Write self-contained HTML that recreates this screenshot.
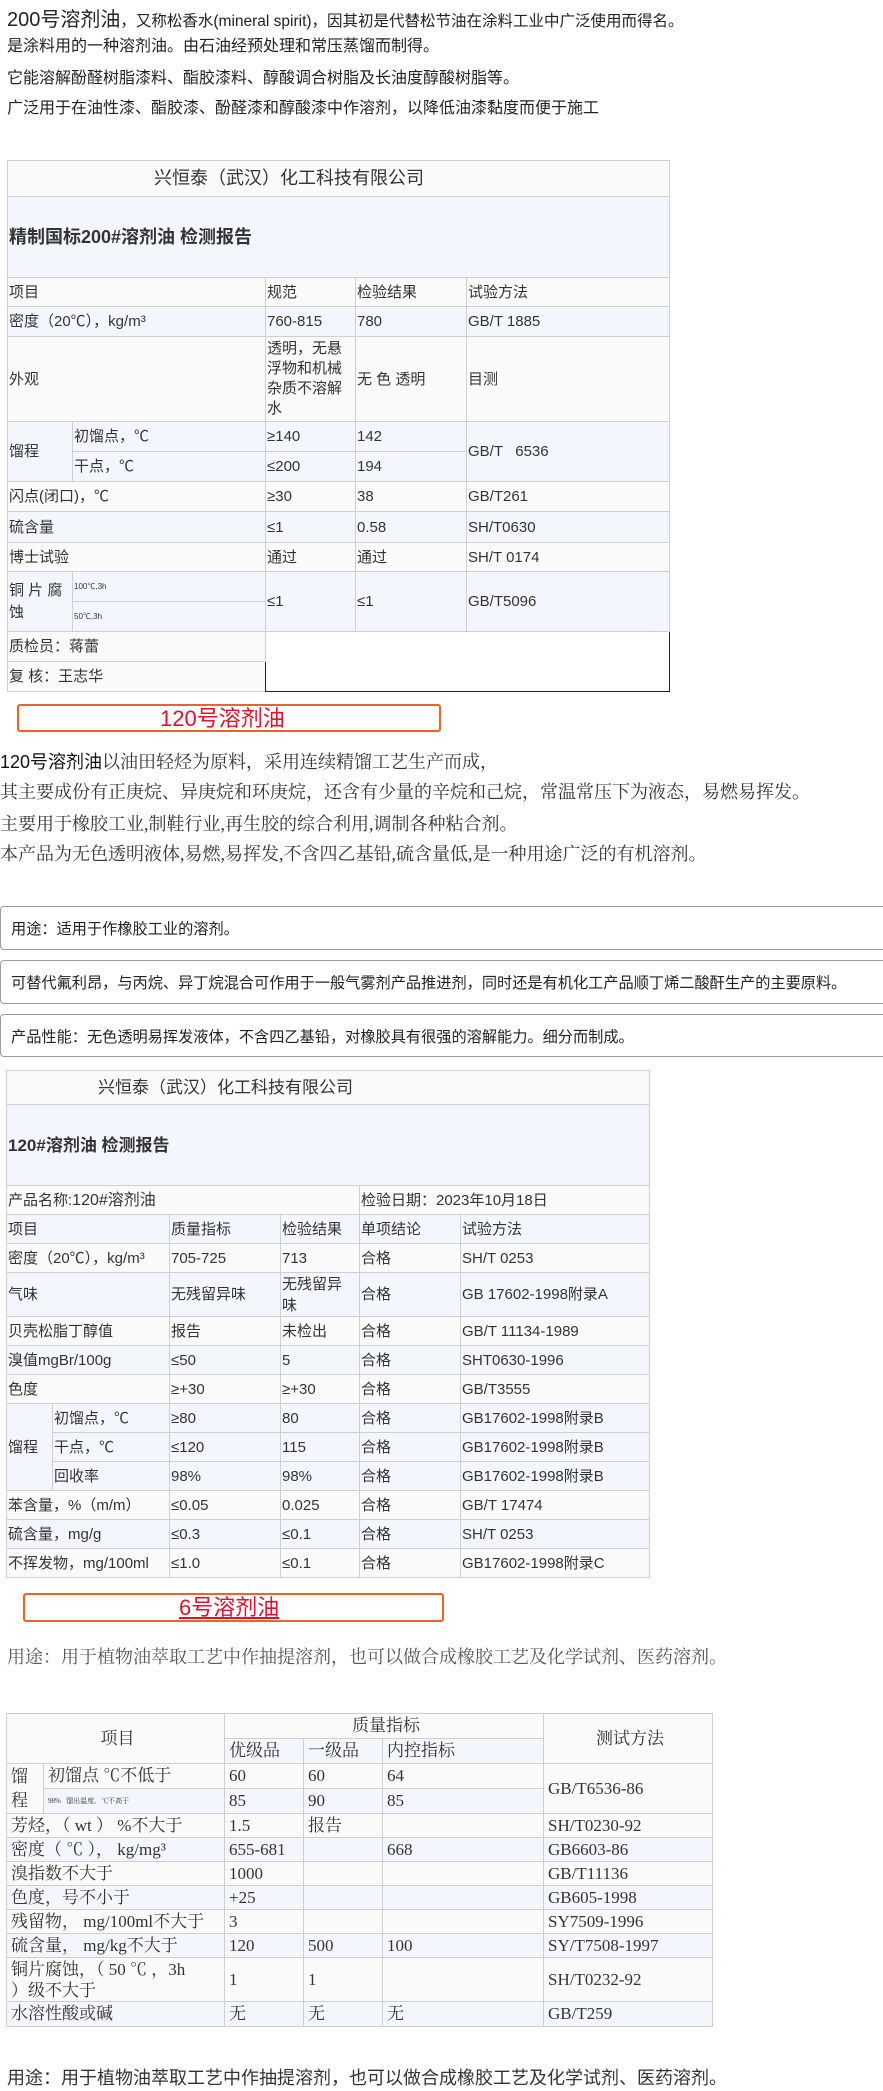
<!DOCTYPE html>
<html><head><meta charset="utf-8">
<style>
*{margin:0;padding:0;box-sizing:border-box}
body{width:883px;height:2091px;background:#fff;position:relative;overflow:hidden;font-family:"Liberation Sans","Noto Sans CJK SC",sans-serif;color:#222}
.abs{position:absolute;white-space:nowrap}
table{border-collapse:collapse;table-layout:fixed;position:absolute}
td{border:1px solid #cfcfcf;padding:0 0 0 1px;vertical-align:middle;white-space:nowrap;overflow:hidden;color:#333}
.a td{background:#fafafa}
.b td{background:#f3f7fd}
.t1 td,.t2 td{font-size:15px;line-height:19px}
.t3 td{font-family:"Liberation Serif","Noto Serif CJK SC",serif;font-size:17px;line-height:22px;padding-left:4px}
.ob{position:absolute;border:2px solid #e8642a;border-radius:3px;color:#e3102a;font-size:22px;line-height:26px}
.box{position:absolute;left:0;width:900px;border:1px solid #9a9a9a;border-radius:4px;font-size:15.2px;color:#222;padding-left:10px;display:flex;align-items:center}
.serif{font-family:"Liberation Serif","Noto Serif CJK SC",serif}
</style></head><body>

<div class="abs" style="left:7px;top:8px;font-size:15.5px;line-height:24px"><span style="font-size:20px">200号溶剂油</span>，又称松香水(mineral spirit)，因其初是代替松节油在涂料工业中广泛使用而得名。</div>
<div class="abs" style="left:7px;top:37px;font-size:16px;line-height:20px">是涂料用的一种溶剂油。由石油经预处理和常压蒸馏而制得。</div>
<div class="abs" style="left:7px;top:69px;font-size:16px;line-height:20px">它能溶解酚醛树脂漆料、酯胶漆料、醇酸调合树脂及长油度醇酸树脂等。</div>
<div class="abs" style="left:7px;top:99px;font-size:16px;line-height:20px">广泛用于在油性漆、酯胶漆、酚醛漆和醇酸漆中作溶剂，以降低油漆黏度而便于施工</div>

<table class="t1" style="left:7px;top:160px;width:662px">
<colgroup><col style="width:65px"><col style="width:193px"><col style="width:90px"><col style="width:111px"><col style="width:203px"></colgroup>
<tr class="a" style="height:36px"><td colspan="5" style="font-size:18px;padding-left:146px">兴恒泰（武汉）化工科技有限公司</td></tr>
<tr class="b" style="height:81px"><td colspan="5" style="font-size:18px;font-weight:bold">精制国标200#溶剂油 检测报告</td></tr>
<tr class="a" style="height:29px"><td colspan="2">项目</td><td>规范</td><td>检验结果</td><td>试验方法</td></tr>
<tr class="b" style="height:30px"><td colspan="2">密度（20℃），kg/m³</td><td>760-815</td><td>780</td><td>GB/T 1885</td></tr>
<tr class="a" style="height:85px"><td colspan="2">外观</td><td style="line-height:20px">透明，无悬<br>浮物和机械<br>杂质不溶解<br>水</td><td>无 色 透明</td><td>目测</td></tr>
<tr class="b" style="height:30px"><td rowspan="2">馏程</td><td>初馏点，℃</td><td>≥140</td><td>142</td><td rowspan="2">GB/T &nbsp; 6536</td></tr>
<tr class="b" style="height:30px"><td>干点，℃</td><td>≤200</td><td>194</td></tr>
<tr class="a" style="height:30px"><td colspan="2">闪点(闭口)，℃</td><td>≥30</td><td>38</td><td>GB/T261</td></tr>
<tr class="b" style="height:31px"><td colspan="2">硫含量</td><td>≤1</td><td>0.58</td><td>SH/T0630</td></tr>
<tr class="a" style="height:29px"><td colspan="2">博士试验</td><td>通过</td><td>通过</td><td>SH/T 0174</td></tr>
<tr class="b" style="height:30px"><td rowspan="2" style="line-height:22px">铜 片 腐<br>蚀</td><td style="font-size:8px">100℃,3h</td><td rowspan="2">≤1</td><td rowspan="2">≤1</td><td rowspan="2">GB/T5096</td></tr>
<tr class="b" style="height:30px"><td style="font-size:8px">50℃,3h</td></tr>
<tr class="a" style="height:30px"><td colspan="2">质检员：蒋蕾</td><td colspan="3" rowspan="2" style="background:#fff;border:1px solid #222"></td></tr>
<tr class="a" style="height:30px"><td colspan="2">复 核：王志华</td></tr>
</table>

<div class="ob" style="left:17px;top:704px;width:424px;height:28px;padding-left:141px">120号溶剂油</div>

<div class="abs serif" style="left:0;top:750px;font-size:18px;line-height:24px;color:#333"><span style="font-family:'Liberation Sans','Noto Sans CJK SC',sans-serif;color:#111">120号溶剂油</span>以油田轻烃为原料，采用连续精馏工艺生产而成，</div>
<div class="abs serif" style="left:0;top:780px;font-size:18px;line-height:24px;color:#333">其主要成份有正庚烷、异庚烷和环庚烷，还含有少量的辛烷和己烷，常温常压下为液态，易燃易挥发。</div>
<div class="abs serif" style="left:0;top:812px;font-size:18px;line-height:24px;color:#333">主要用于橡胶工业,制鞋行业,再生胶的综合利用,调制各种粘合剂。</div>
<div class="abs serif" style="left:0;top:842px;font-size:18px;line-height:24px;color:#333">本产品为无色透明液体,易燃,易挥发,不含四乙基铅,硫含量低,是一种用途广泛的有机溶剂。</div>

<div class="box" style="top:906px;height:44px">用途：适用于作橡胶工业的溶剂。</div>
<div class="box" style="top:960px;height:44px">可替代氟利昂，与丙烷、异丁烷混合可作用于一般气雾剂产品推进剂，同时还是有机化工产品顺丁烯二酸酐生产的主要原料。</div>
<div class="box" style="top:1014px;height:43px">产品性能：无色透明易挥发液体，不含四乙基铅，对橡胶具有很强的溶解能力。细分而制成。</div>

<table class="t2" style="left:6px;top:1070px;width:643px">
<colgroup><col style="width:46px"><col style="width:117px"><col style="width:111px"><col style="width:79px"><col style="width:101px"><col style="width:189px"></colgroup>
<tr class="a" style="height:34px"><td colspan="6" style="font-size:17px;padding-left:91px">兴恒泰（武汉）化工科技有限公司</td></tr>
<tr class="b" style="height:81px"><td colspan="6" style="font-size:17px;font-weight:bold">120#溶剂油 检测报告</td></tr>
<tr class="a" style="height:29px"><td colspan="4">产品名称:<span style="font-size:16px">120#溶剂油</span></td><td colspan="2">检验日期：2023年10月18日</td></tr>
<tr class="b" style="height:29px"><td colspan="2">项目</td><td>质量指标</td><td>检验结果</td><td>单项结论</td><td>试验方法</td></tr>
<tr class="a" style="height:29px"><td colspan="2">密度（20℃），kg/m³</td><td>705-725</td><td>713</td><td>合格</td><td>SH/T 0253</td></tr>
<tr class="b" style="height:44px"><td colspan="2">气味</td><td>无残留异味</td><td style="line-height:21px">无残留异<br>味</td><td>合格</td><td>GB 17602-1998附录A</td></tr>
<tr class="a" style="height:29px"><td colspan="2">贝壳松脂丁醇值</td><td>报告</td><td>未检出</td><td>合格</td><td>GB/T 11134-1989</td></tr>
<tr class="b" style="height:29px"><td colspan="2">溴值mgBr/100g</td><td>≤50</td><td>5</td><td>合格</td><td>SHT0630-1996</td></tr>
<tr class="a" style="height:29px"><td colspan="2">色度</td><td>≥+30</td><td>≥+30</td><td>合格</td><td>GB/T3555</td></tr>
<tr class="b" style="height:29px"><td rowspan="3">馏程</td><td>初馏点，℃</td><td>≥80</td><td>80</td><td>合格</td><td>GB17602-1998附录B</td></tr>
<tr class="b" style="height:29px"><td>干点，℃</td><td>≤120</td><td>115</td><td>合格</td><td>GB17602-1998附录B</td></tr>
<tr class="b" style="height:29px"><td>回收率</td><td>98%</td><td>98%</td><td>合格</td><td>GB17602-1998附录B</td></tr>
<tr class="a" style="height:29px"><td colspan="2">苯含量，%（m/m）</td><td>≤0.05</td><td>0.025</td><td>合格</td><td>GB/T 17474</td></tr>
<tr class="b" style="height:29px"><td colspan="2">硫含量，mg/g</td><td>≤0.3</td><td>≤0.1</td><td>合格</td><td>SH/T 0253</td></tr>
<tr class="a" style="height:29px"><td colspan="2">不挥发物，mg/100ml</td><td>≤1.0</td><td>≤0.1</td><td>合格</td><td>GB17602-1998附录C</td></tr>
</table>

<div class="ob" style="left:23px;top:1593px;width:421px;height:29px;padding-left:154px;text-decoration:underline">6号溶剂油</div>

<div class="abs serif" style="left:7px;top:1645px;font-size:18px;line-height:24px;color:#555">用途：用于植物油萃取工艺中作抽提溶剂，也可以做合成橡胶工艺及化学试剂、医药溶剂。</div>

<table class="t3" style="left:6px;top:1713px;width:706px">
<colgroup><col style="width:37px"><col style="width:181px"><col style="width:79px"><col style="width:79px"><col style="width:161px"><col style="width:169px"></colgroup>
<tr class="a" style="height:25px"><td colspan="2" rowspan="2" style="text-align:center">项目</td><td colspan="3" style="text-align:center">质量指标</td><td rowspan="2" style="text-align:center">测试方法</td></tr>
<tr class="b" style="height:25px"><td>优级品</td><td>一级品</td><td>内控指标</td></tr>
<tr class="a" style="height:25px"><td rowspan="2" style="line-height:24px">馏<br>程</td><td>初馏点 ℃不低于</td><td>60</td><td>60</td><td>64</td><td rowspan="2">GB/T6536-86</td></tr>
<tr class="b" style="height:25px"><td style="font-size:7px">98% &nbsp; 馏出温度, &nbsp; ℃不高于</td><td>85</td><td>90</td><td>85</td></tr>
<tr class="a" style="height:24px"><td colspan="2">芳烃，（ wt ） %不大于</td><td>1.5</td><td>报告</td><td></td><td>SH/T0230-92</td></tr>
<tr class="b" style="height:24px"><td colspan="2">密度（ ℃ ）， kg/mg³</td><td>655-681</td><td></td><td>668</td><td>GB6603-86</td></tr>
<tr class="a" style="height:24px"><td colspan="2">溴指数不大于</td><td>1000</td><td></td><td></td><td>GB/T11136</td></tr>
<tr class="b" style="height:24px"><td colspan="2">色度，号不小于</td><td>+25</td><td></td><td></td><td>GB605-1998</td></tr>
<tr class="a" style="height:24px"><td colspan="2">残留物， mg/100ml不大于</td><td>3</td><td></td><td></td><td>SY7509-1996</td></tr>
<tr class="b" style="height:24px"><td colspan="2">硫含量， mg/kg不大于</td><td>120</td><td>500</td><td>100</td><td>SY/T7508-1997</td></tr>
<tr class="a" style="height:44px"><td colspan="2" style="line-height:21px">铜片腐蚀，（ 50 ℃ ，3h<br>）级不大于</td><td>1</td><td>1</td><td></td><td>SH/T0232-92</td></tr>
<tr class="b" style="height:25px"><td colspan="2">水溶性酸或碱</td><td>无</td><td>无</td><td>无</td><td>GB/T259</td></tr>
</table>

<div class="abs" style="left:7px;top:2066px;font-size:18px;line-height:24px;color:#333">用途：用于植物油萃取工艺中作抽提溶剂，也可以做合成橡胶工艺及化学试剂、医药溶剂。</div>
</body></html>
